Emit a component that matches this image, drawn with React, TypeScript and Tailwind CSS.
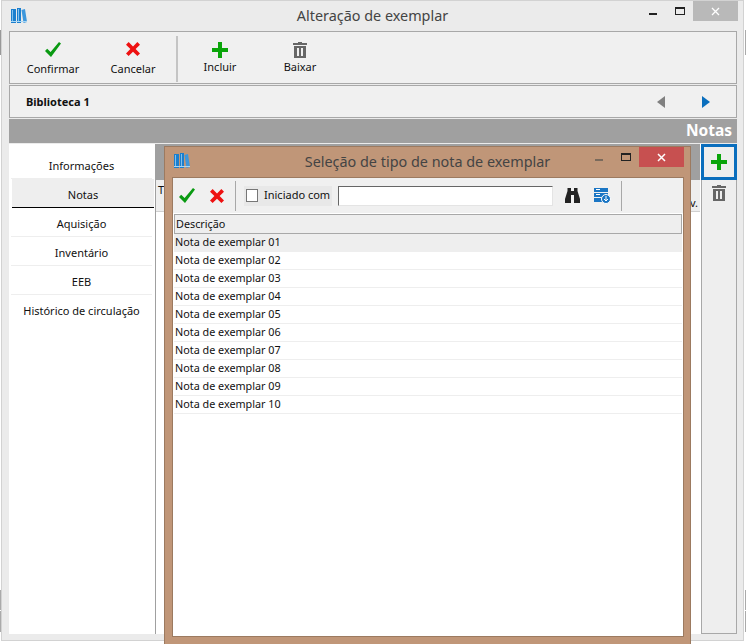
import React from 'react';

const font = { fontFamily: '"Noto Sans", sans-serif' };

const Check = ({ w = 16, h = 15 }: { w?: number; h?: number }) => (
  <svg width={w} height={h} viewBox="0 0 16 15">
    <path d="M0 9 L2.2 6.8 L5.6 10 L14 0 L16 1.6 L6 15 Z" fill="#0a9a12" />
  </svg>
);

const Cross = ({ size = 14 }: { size?: number }) => (
  <svg width={size} height={size} viewBox="0 0 16 16">
    <path d="M3 0 L8 5 L13 0 L16 3 L11 8 L16 13 L13 16 L8 11 L3 16 L0 13 L5 8 L0 3 Z" fill="#ee1111" />
  </svg>
);

const Plus = () => (
  <svg width="16" height="16" viewBox="0 0 16 16">
    <path d="M6 0 H10 V6 H16 V10 H10 V16 H6 V10 H0 V6 H6 Z" fill="#0aa50a" />
  </svg>
);

const Trash = () => (
  <svg width="14" height="16" viewBox="0 0 14 16">
    <path d="M5 0 H9 V1 H14 V3 H0 V1 H5 Z" fill="#666" />
    <path d="M1 4 H13 V16 H1 Z M4 6 V14 H6 V6 Z M8 6 V14 H10 V6 Z" fill="#666" fillRule="evenodd" />
  </svg>
);

const Books = () => (
  <svg width="16" height="16" viewBox="0 0 16 16">
    <rect x="0" y="1" width="5" height="14" fill="#1b7fce" />
    <rect x="6" y="0" width="4" height="15" fill="#1b7fce" />
    <path d="M10.5 2 L14 1 L16 14 L12.5 15 Z" fill="#3d97dc" />
    <rect x="1" y="2" width="1" height="11" fill="#7fc0ee" />
    <rect x="7" y="1" width="1" height="12" fill="#7fc0ee" />
    <rect x="0" y="13" width="16" height="1" fill="#a8d6f4" />
  </svg>
);

const Binoculars = () => (
  <svg width="15" height="15" viewBox="0 0 15 15">
    <path d="M2.5 0 H6 V3 H9 V0 H12.5 V3 L15 11 V15 H9 V7 H6 V15 H0 V11 L2.5 3 Z" fill="#222" />
  </svg>
);

const ServerDown = () => (
  <svg width="17" height="16" viewBox="0 0 17 16">
    <rect x="0" y="0" width="14" height="4" fill="#1b76c4" />
    <rect x="0" y="5" width="14" height="4" fill="#1b76c4" />
    <rect x="0" y="10" width="9" height="4" fill="#1b76c4" />
    <rect x="2" y="1" width="4" height="1" fill="#fff" />
    <rect x="2" y="6" width="4" height="1" fill="#fff" />
    <circle cx="12" cy="11" r="4.5" fill="#1b76c4" stroke="#fff" />
    <path d="M12 8 V12 M10 11 L12 13 L14 11" stroke="#fff" fill="none" />
  </svg>
);

const Btn = ({ icon, label, top, gap }: { icon: React.ReactNode; label: string; top: string; gap: string }) => (
  <div className={`w-[80px] flex flex-col items-center ${top}`}>
    <div className="h-[20px] flex items-center">{icon}</div>
    <span className={`text-[11px] leading-[16px] text-[#111] ${gap}`}>{label}</span>
  </div>
);

const tabs = ['Informações', 'Notas', 'Aquisição', 'Inventário', 'EEB', 'Histórico de circulação'];
const notas = ['01', '02', '03', '04', '05', '06', '07', '08', '09', '10'];

export default function App() {
  return (
    <div className="relative w-[746px] h-[644px] overflow-hidden bg-white" style={font}>
      {/* bits of the window behind */}
      <div className="absolute left-0 top-[30px] w-[1px] h-[25px] bg-[#999]" />
      <div className="absolute left-0 top-[590px] w-[1px] h-[20px] bg-[#aaa]" />
      <div className="absolute left-0 top-[611px] w-[1px] h-[21px] bg-[#aaa]" />
      <div className="absolute right-0 top-[30px] w-[1px] h-[25px] bg-[#aaa]" />
      <div className="absolute right-0 top-[590px] w-[1px] h-[20px] bg-[#aaa]" />
      <div className="absolute right-0 top-[611px] w-[1px] h-[21px] bg-[#aaa]" />

      <div className="ml-[1px] w-[743px] h-[641px] border border-[#d2d2d2] bg-[#ebebeb] flex flex-col">
        {/* Title bar */}
        <div className="h-[30px] relative flex items-center justify-center shrink-0">
          <div className="absolute left-[9px] top-[7px]"><Books /></div>
          <span className="text-[14.4px] text-[#444]">Alteração de exemplar</span>
          <div className="absolute right-[86px] top-[12px] w-[8px] h-[2px] bg-[#222]" />
          <div className="absolute right-[58px] top-[6px] w-[10px] h-[8px] border border-[#222] border-t-2" />
          <div className="absolute right-[5px] top-0 w-[45px] h-[20px] bg-[#b9b9b9] flex items-center justify-center">
            <svg width="9" height="9" viewBox="0 0 9 9"><path d="M1 1 L8 8 M8 1 L1 8" stroke="#fff" strokeWidth="1.3" /></svg>
          </div>
        </div>

        <div className="flex-1 flex flex-col pl-[7px] pr-[6px] pb-[6px]">
          {/* Toolbar */}
          <div className="h-[53px] border border-[#a8a8a8] bg-[#f0f0f0] flex items-start shrink-0">
            <div className="flex w-[166px] pl-[3px] justify-between pr-[3px]">
              <Btn icon={<Check />} label="Confirmar" top="pt-[7px]" gap="mt-[2px]" />
              <Btn icon={<Cross />} label="Cancelar" top="pt-[7px]" gap="mt-[2px]" />
            </div>
            <div className="w-[2px] h-[46px] mt-[4px] bg-[#c4c4c4]" />
            <div className="flex ml-[2px]">
              <Btn icon={<Plus />} label="Incluir" top="pt-[8px]" gap="-mt-[1px]" />
              <Btn icon={<Trash />} label="Baixar" top="pt-[8px]" gap="-mt-[1px]" />
            </div>
          </div>

          {/* Library row */}
          <div className="h-[33px] mt-[1px] pt-[1px] border border-[#a8a8a8] bg-[#f0f0f0] flex items-center shrink-0">
            <span className="ml-[16px] text-[11px] font-bold text-[#111]">Biblioteca 1</span>
            <div className="ml-auto flex items-center gap-[37px] mr-[26px]">
              <svg width="8" height="12" viewBox="0 0 8 12"><path d="M8 0 V12 L0 6 Z" fill="#808080" /></svg>
              <svg width="8" height="12" viewBox="0 0 8 12"><path d="M0 0 V12 L8 6 Z" fill="#0a6ebd" /></svg>
            </div>
          </div>

          {/* Section */}
          <div className="h-[24px] mt-[1px] bg-[#a0a0a0] flex items-center justify-end pr-[5px] shrink-0">
            <span className="text-[15.5px] font-bold text-white">Notas</span>
          </div>

          <div className="flex-1 flex bg-white min-h-0 mt-[1px]">
            {/* Side tabs */}
            <div className="w-[146px] pt-[6px] shrink-0">
              {tabs.map((t, i) => (
                <div
                  key={t}
                  className={
                    t === 'Notas'
                      ? 'h-[29px] pt-[5px] ml-[3px] mr-[1px] flex items-center justify-center text-[11px] text-[#111] bg-[#eeeeee] border-b border-black'
                      : i === tabs.length - 1
                        ? 'h-[29px] pt-[3px] ml-[2px] mr-[3px] flex items-center justify-center text-[11px] text-[#111]'
                        : 'h-[29px] pt-[5px] ml-[2px] mr-[3px] flex items-center justify-center text-[11px] text-[#111] border-b border-[#eee]'
                  }
                >
                  {t}
                </div>
              ))}
            </div>

            {/* Content */}
            <div className="flex-1 flex flex-col border-l border-[#a0a0a0]">
              <div className="h-[36px] bg-[#a0a0a0] shrink-0" />
              <div className="h-[32px] bg-[#eeeeee] border-b border-[#d0d0d0] flex items-start justify-between px-[2px] text-[11px] leading-[16px] text-[#111] shrink-0">
                <span className="mt-[2px]">T</span>
                <span className="mt-[15px]">v.</span>
              </div>
              <div className="flex-1 bg-white" />
            </div>

            {/* Right actions */}
            <div className="w-[36px] ml-[1px] border-x border-b border-[#a8a8a8] bg-[#eeeeee] flex flex-col items-center shrink-0">
              <div className="w-[36px] h-[36px] -mx-px shrink-0 border-[3px] border-[#0a6ebd] flex items-center justify-center">
                <Plus />
              </div>
              <div className="mt-[5px]"><Trash /></div>
            </div>
          </div>
        </div>
      </div>

      {/* Selection dialog */}
      <div className="absolute left-[164px] top-[146px] w-[527px] h-[510px] bg-[#c09678] border border-[#9c7a60] flex flex-col">
        <div className="h-[30px] relative flex items-center justify-center shrink-0">
          <div className="absolute left-[9px] top-[6px]"><Books /></div>
          <span className="text-[14.4px] text-[#444]">Seleção de tipo de nota de exemplar</span>
          <div className="absolute right-[87px] top-[12px] w-[8px] h-[2px] bg-[#7a6a5c]" />
          <div className="absolute right-[59px] top-[6px] w-[10px] h-[8px] border border-[#222] border-t-2" />
          <div className="absolute right-[6px] top-0 w-[45px] h-[20px] bg-[#c75050] flex items-center justify-center">
            <svg width="9" height="9" viewBox="0 0 9 9"><path d="M1 1 L8 8 M8 1 L1 8" stroke="#fff" strokeWidth="1.5" /></svg>
          </div>
        </div>

        <div className="ml-[7px] mr-[6px] h-[460px] border border-[#9c7a60] bg-white flex flex-col shrink-0">
          <div className="h-[35px] bg-[#f0f0f0] flex items-center shrink-0">
            <div className="ml-[6px]"><Check /></div>
            <div className="ml-[15px]"><Cross /></div>
            <div className="ml-[11px] w-[1px] h-[30px] bg-[#a8a8a8]" />
            <div className="ml-[8px] h-[20px] w-[88px] bg-[#e8e8e8] flex items-center">
              <div className="ml-[2px] w-[12px] h-[13px] border border-[#777] bg-white" />
              <span className="ml-[6px] text-[11px] text-[#111]">Iniciado com</span>
            </div>
            <div className="ml-[6px] w-[215px] h-[20px] bg-white border border-[#e4e4e4] border-l-[#666] border-t-[#666]" />
            <div className="ml-[12px]"><Binoculars /></div>
            <div className="ml-[14px]"><ServerDown /></div>
            <div className="ml-[10px] w-[1px] h-[30px] bg-[#a8a8a8]" />
          </div>

          <div className="h-[20px] mt-[1px] mx-[1px] bg-[#eeeeee] border border-[#a8a8a8] flex items-center pl-[1px] text-[10.8px] text-[#111] shrink-0">
            Descrição
          </div>
          <div className="mx-[1px]">
            {notas.map((n, i) => (
              <div
                key={n}
                className={`h-[18px] flex items-center pl-[1px] text-[10.8px] text-[#111] border-b border-[#eeeeee] ${i === 0 ? 'bg-[#eeeeee]' : 'bg-white'}`}
              >
                Nota de exemplar {n}
              </div>
            ))}
          </div>
        </div>
      </div>
    </div>
  );
}
